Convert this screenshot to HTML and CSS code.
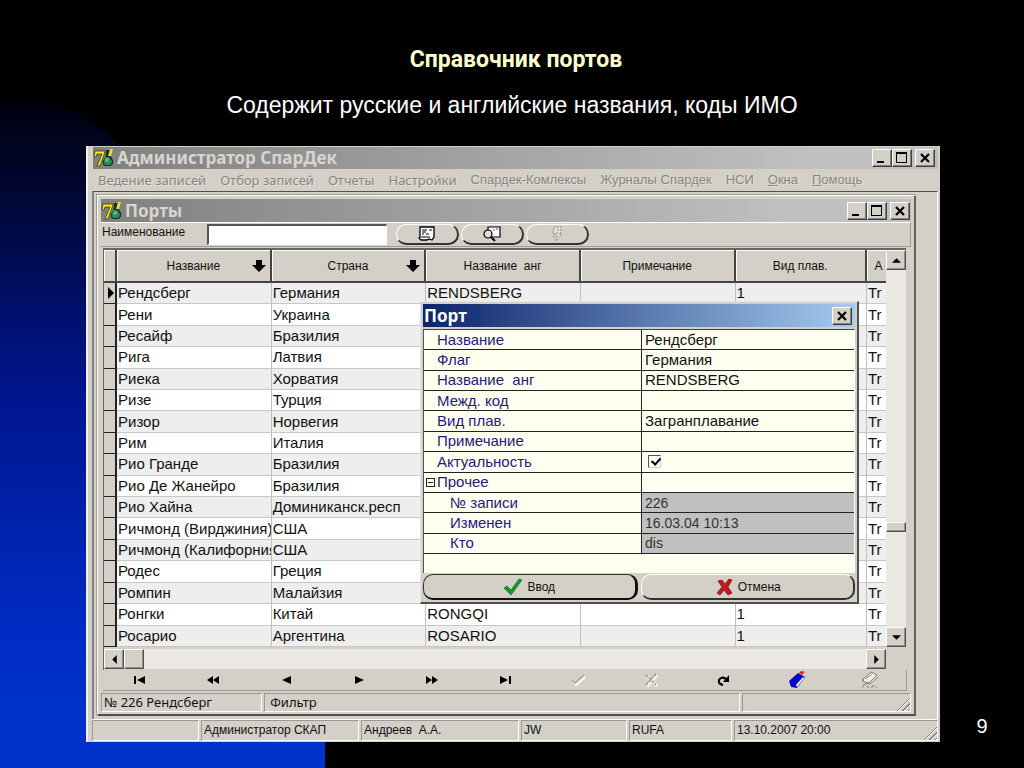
FILE: index.html
```html
<!DOCTYPE html>
<html lang="ru">
<head>
<meta charset="utf-8">
<title>Справочник портов</title>
<link rel="stylesheet" href="styles.css">
</head>
<body>
<svg class="defs" aria-hidden="true">
  <symbol id="min" viewBox="0 0 14 12"><path d="M2 9h7v2H2z"/></symbol>
  <symbol id="max" viewBox="0 0 14 12"><path fill-rule="evenodd" d="M1 0h11v11H1zM2 2v8h9V2z"/></symbol>
  <symbol id="close" viewBox="0 0 14 12"><path d="M3 2l8 8M11 2l-8 8" stroke="#000" stroke-width="2.2"/></symbol>
  <symbol id="logo" viewBox="0 0 22 20">
    <path d="M13 2h4v5l3 5q1 5-3 6h-5q-3-1-2-5l3-6z" fill="#12331c"/>
    <path d="M12 9h4l3 4q0 4-3 4h-3q-3-1-2-4z" fill="#2f8a55"/>
    <circle cx="14" cy="12" r="2" fill="#5fb59a"/>
    <path d="M17 1h3l-2 7h-3z" fill="#e8e020"/>
    <path d="M2 3h10l-1 4-4 11H4l5-12H4L3 9H1z" fill="#f4ea18" stroke="#3a3a10" stroke-width=".8"/>
  </symbol>
  <symbol id="sort" viewBox="0 0 14 12"><path d="M4 0h6v5h4l-7 7-7-7h4z"/></symbol>
</svg>
<main class="slide">
  <div class="backdrop"></div>
  <header class="heading">
    <h1 class="title">Справочник портов</h1>
    <p class="subtitle">Содержит русские и английские названия, коды ИМО</p>
  </header>
  <section class="window">
    <div class="titlebar">
      <svg class="logo"><use href="#logo"/></svg>
      <span class="caption">Администратор СпарДек</span>
      <span class="winbuttons">
        <button class="winbtn" aria-label="Свернуть"><svg><use href="#min"/></svg></button><button class="winbtn" aria-label="Развернуть"><svg><use href="#max"/></svg></button><button class="winbtn spaced" aria-label="Закрыть"><svg><use href="#close"/></svg></button>
      </span>
    </div>
    <nav class="menu">
      <a href="#">Ведение записей</a><a href="#">Отбор записей</a><a href="#">Отчеты</a><a href="#">Настройки</a><a href="#" class="light">Спардек-Комлексы</a><a href="#" class="light">Журналы Спардек</a><a href="#" class="light">НСИ</a><a href="#" class="light"><u>О</u>кна</a><a href="#" class="light"><u>П</u>омощь</a>
    </nav>
    <div class="mdi">
      <section class="child">
        <div class="titlebar child-title">
          <svg class="logo"><use href="#logo"/></svg>
          <span class="caption">Порты</span>
          <span class="winbuttons">
            <button class="winbtn" aria-label="Свернуть"><svg><use href="#min"/></svg></button><button class="winbtn" aria-label="Развернуть"><svg><use href="#max"/></svg></button><button class="winbtn spaced" aria-label="Закрыть"><svg><use href="#close"/></svg></button>
          </span>
        </div>
        <div class="toolbar">
          <label class="search-label" for="name">Наименование</label>
          <input class="search" id="name" type="text">
          <button class="pill" aria-label="Список">
            <svg viewBox="0 0 18 16"><path d="M2 1h14v10l-2 3-3-1-2 1H3l-2-2 1-1z" fill="#fff" stroke="#000" stroke-width="1.3"/><path d="M4 4h5M11 4h3M4 6h4M4 8h2M8 8h3M3 11h9" stroke="#000" fill="none"/></svg>
          </button>
          <button class="pill" aria-label="Найти">
            <svg viewBox="0 0 18 16"><path d="M5 1h12v10H5z" fill="#fff" stroke="#000" stroke-width="1.2"/><path d="M10 4h2M13 3h2" stroke="#555"/><circle cx="5" cy="8" r="4" fill="#ddd" stroke="#000" stroke-width="1.2"/><path d="M8 11l4 4" stroke="#000" stroke-width="2"/></svg>
          </button>
          <button class="pill" aria-label="Выполнить" disabled>
            <svg viewBox="0 0 18 16"><path d="M6 1h7v5l-2 2h3l-6 7v-4H5l3-3H5z" fill="#e4e1da" stroke="#8c8981" stroke-dasharray="2 1"/><path d="M9 4h2M8 7h2M8 10h2" stroke="#8c8981"/></svg>
          </button>
        </div>
        <div class="gridbox">
          <div class="tablewrap">
            <table class="ports">
              <colgroup><col class="c-ind"><col class="c-wide"><col class="c-wide"><col class="c-wide"><col class="c-wide"><col class="c-kind"><col class="c-act"></colgroup>
              <thead><tr><th></th><th><span class="th">Название<svg><use href="#sort"/></svg></span></th><th><span class="th">Страна<svg><use href="#sort"/></svg></span></th><th>Название&nbsp; анг</th><th>Примечание</th><th>Вид плав.</th><th class="cut">А</th></tr></thead>
              <tbody>
                <tr><th class="current"></th><td>Рендсберг</td><td>Германия</td><td>RENDSBERG</td><td></td><td>1</td><td>Tr</td></tr>
                <tr><th></th><td>Рени</td><td>Украина</td><td></td><td></td><td></td><td>Tr</td></tr>
                <tr><th></th><td>Ресайф</td><td>Бразилия</td><td></td><td></td><td></td><td>Tr</td></tr>
                <tr><th></th><td>Рига</td><td>Латвия</td><td></td><td></td><td></td><td>Tr</td></tr>
                <tr><th></th><td>Риека</td><td>Хорватия</td><td></td><td></td><td></td><td>Tr</td></tr>
                <tr><th></th><td>Ризе</td><td>Турция</td><td></td><td></td><td></td><td>Tr</td></tr>
                <tr><th></th><td>Ризор</td><td>Норвегия</td><td></td><td></td><td></td><td>Tr</td></tr>
                <tr><th></th><td>Рим</td><td>Италия</td><td></td><td></td><td></td><td>Tr</td></tr>
                <tr><th></th><td>Рио Гранде</td><td>Бразилия</td><td></td><td></td><td></td><td>Tr</td></tr>
                <tr><th></th><td>Рио Де Жанейро</td><td>Бразилия</td><td></td><td></td><td></td><td>Tr</td></tr>
                <tr><th></th><td>Рио Хайна</td><td>Доминиканск.респ</td><td></td><td></td><td></td><td>Tr</td></tr>
                <tr><th></th><td>Ричмонд (Вирджиния)</td><td>США</td><td></td><td></td><td></td><td>Tr</td></tr>
                <tr><th></th><td>Ричмонд (Калифорния)</td><td>США</td><td></td><td></td><td></td><td>Tr</td></tr>
                <tr><th></th><td>Родес</td><td>Греция</td><td></td><td></td><td></td><td>Tr</td></tr>
                <tr><th></th><td>Ромпин</td><td>Малайзия</td><td></td><td></td><td></td><td>Tr</td></tr>
                <tr><th></th><td>Ронгки</td><td>Китай</td><td>RONGQI</td><td></td><td>1</td><td>Tr</td></tr>
                <tr><th></th><td>Росарио</td><td>Аргентина</td><td>ROSARIO</td><td></td><td>1</td><td>Tr</td></tr>
              </tbody>
            </table>
          </div>
          <div class="vscroll">
            <button class="sbtn" aria-label="Вверх"><svg viewBox="0 0 8 8"><path d="M0 6h8L4 2z"/></svg></button>
            <span class="track-before"></span><span class="vthumb"></span><span class="track-after"></span>
            <button class="sbtn" aria-label="Вниз"><svg viewBox="0 0 8 8"><path d="M0 2h8L4 6z"/></svg></button>
          </div>
          <div class="hscroll">
            <button class="sbtn" aria-label="Влево"><svg viewBox="0 0 8 8"><path d="M6 0v8L2 4z"/></svg></button>
            <span class="hthumb"></span><span class="track-after"></span>
            <button class="sbtn" aria-label="Вправо"><svg viewBox="0 0 8 8"><path d="M2 0v8l4-4z"/></svg></button>
          </div>
        </div>
        <div class="navigator">
          <button aria-label="Первая"><svg viewBox="0 0 20 16"><path d="M4 4h2v8H4zM15 4v8L7 8z"/></svg></button>
          <button aria-label="Страница назад"><svg viewBox="0 0 20 16"><path d="M10 4v8L4 8zM16 4v8l-6-4z"/></svg></button>
          <button aria-label="Назад"><svg viewBox="0 0 20 16"><path d="M15 4v8L6 8z"/></svg></button>
          <button aria-label="Вперед"><svg viewBox="0 0 20 16"><path d="M6 4v8l9-4z"/></svg></button>
          <button aria-label="Страница вперед"><svg viewBox="0 0 20 16"><path d="M4 4v8l6-4zM10 4v8l6-4z"/></svg></button>
          <button aria-label="Последняя"><svg viewBox="0 0 20 16"><path d="M5 4v8l8-4zM14 4h2v8h-2z"/></svg></button>
          <button aria-label="Сохранить" disabled><svg viewBox="0 0 20 16"><path d="M5 9l3 4 9-8" stroke="#fff" stroke-width="2" fill="none"/><path d="M4 8l3 3 9-8" stroke="#a3a099" stroke-width="1.4" fill="none"/></svg></button>
          <button aria-label="Отменить" disabled><svg viewBox="0 0 20 16"><path d="M6 4l10 10M16 3L6 14" stroke="#fff" stroke-width="3"/><path d="M5 3l10 10M15 2L5 13" stroke="#a3a099" stroke-width="2" stroke-dasharray="3 1"/></svg></button>
          <button aria-label="Обновить"><svg viewBox="0 0 20 16"><path d="M9 13q-5-1-4-5 2-4 7-1" stroke="#000" stroke-width="2.2" fill="none"/><path d="M15 3v7H9z"/></svg></button>
          <button aria-label="Справочник"><svg class="big" viewBox="0 0 20 18"><path d="M2 10l9-8 7 4-8 11-6-1z" fill="#0a08c4"/><path d="M9 14l7-8 1 1-7 9z" fill="#fff"/><path d="M12 2l2-2 5 1-3 1v2z" fill="#d8232f"/></svg></button>
          <button aria-label="Закладки" disabled><svg class="big" viewBox="0 0 20 18"><path d="M3 8l8-7 6 3-8 8-5-1zM5 12l5 1 8-7M3 8v3M5 8l7-5M3 17v-3h3M8 17v-2M12 17v-2h3M17 17v-1" fill="#eeece6" stroke="#85827b"/></svg></button>
        </div>
        <div class="status inner">
          <span>№ 226 Рендсберг</span><span>Фильтр</span><span class="grip"></span>
        </div>
      </section>
      <section class="dialog">
        <div class="dialog-title"><span>Порт</span><button class="winbtn" aria-label="Закрыть"><svg><use href="#close"/></svg></button></div>
        <div class="sheet">
          <table class="props">
            <tbody>
            <tr><th>Название</th><td>Рендсберг</td></tr>
            <tr><th>Флаг</th><td>Германия</td></tr>
            <tr><th>Название&nbsp; анг</th><td>RENDSBERG</td></tr>
            <tr><th>Межд. код</th><td></td></tr>
            <tr><th>Вид плав.</th><td>Загранплавание</td></tr>
            <tr><th>Примечание</th><td></td></tr>
            <tr><th><label for="actual">Актуальность</label></th><td><input class="check" id="actual" type="checkbox" checked></td></tr>
            <tr><th class="group"><span class="toggle"></span>Прочее</th><td></td></tr>
            <tr><th class="sub">№ записи</th><td class="ro">226</td></tr>
            <tr><th class="sub">Изменен</th><td class="ro">16.03.04 10:13</td></tr>
            <tr><th class="sub">Кто</th><td class="ro">dis</td></tr>
            </tbody>
          </table>
        </div>
        <div class="actions">
          <button class="action default"><svg viewBox="0 0 20 18"><path d="M1 10l3-2 4 4L16 1l3 1L8 17z" fill="#159a2c" stroke="#0c6a1c" stroke-width=".7"/></svg>Ввод</button>
          <button class="action"><svg viewBox="0 0 20 18"><path d="M4 3l4-1 3 4 4-5 3 1-4 7 4 6-4 2-4-5-4 5-3-2 5-6z" fill="#c01a20" stroke="#7c0c10" stroke-width=".7"/></svg>Отмена</button>
        </div>
      </section>
    </div>
    <div class="status outer">
      <span></span><span>Администратор СКАП</span><span>Андреев&nbsp; А.А.</span><span>JW</span><span>RUFA</span><span class="grip">13.10.2007 20:00</span>
    </div>
  </section>
  <span class="page">9</span>
</main>
</body>
</html>
```
FILE: styles.css
```css
* { box-sizing: border-box; }
body { margin: 0; background: #000; font-family: "Liberation Sans", Arial, sans-serif; color: #111; }
button { font: inherit; color: inherit; padding: 0; margin: 0; border: 0; background: none; }
svg { display: block; flex: none; }
.defs { position: absolute; width: 0; height: 0; }

.slide {
  position: relative;
  display: grid;
  grid-template-columns: 86px minmax(0, 1fr) 84px;
  grid-template-rows: auto auto 1fr;
  min-height: 100vh;
  padding-bottom: 26px;
}
.backdrop {
  position: absolute;
  left: 0; top: 96px; bottom: 0;
  width: 325px;
  background: linear-gradient(#00000a, #00062c 12%, #00148a 42%, #002cc4 80%, #0033cc);
  clip-path: path("M0 4C60 4 92 18 118 50L325 260V2000H0Z");
}
.heading { grid-column: 1 / -1; text-align: center; padding: 44px 0 26px; position: relative; }
.title { margin: 0 0 14px; padding-left: 8px; font: bold 23px/32px Roboto, "Liberation Sans", sans-serif; color: #ffffcc; }
.subtitle { margin: 0; font-size: 23px; line-height: 30px; color: #fff; }
.page { grid-column: 3; grid-row: 2; align-self: end; justify-self: center; color: #fff; font-size: 20px; line-height: 32px; }

.window { position: relative; grid-column: 2; grid-row: 2; background: #d4d0c8; border-left: 2px solid #f2f2f4; padding: 1px 2px 1px 4px; }
.titlebar { display: flex; align-items: center; height: 22px; background: linear-gradient(90deg, #808080, #c0c0c0 85%); margin-left: 1px; padding-right: 3px; }
.child-title { height: 23px; margin: 0; padding-right: 1px; }
.logo { width: 22px; height: 20px; margin-right: 2px; }
.caption { flex: 1; font: bold 17px/22px "Noto Sans", "Open Sans", sans-serif; color: #d8d5ce; white-space: nowrap; }
.winbuttons { display: flex; }
.winbtn { display: flex; align-items: center; justify-content: center; width: 20px; height: 18px; background: #d4d0c8; border: 1px solid; border-color: #fff #404040 #404040 #fff; box-shadow: inset -1px -1px #808080; }
.winbtn svg { width: 14px; height: 12px; }
.spaced { margin-left: 3px; }

.menu { display: flex; gap: 14px; height: 22px; padding-left: 6px; font: 13px/22px "Noto Sans", "Open Sans", sans-serif; }
.menu a { color: #8a8780; text-decoration: none; white-space: nowrap; text-shadow: 1px 1px #e2dfd8; }
.menu .light { font-family: "Liberation Sans", sans-serif; line-height: 21px; }

.mdi { position: relative; border-top: 1px solid #505050; border-left: 2px solid #808080; border-right: 1px solid #fff; padding: 3px 21px 3px 3px; }
.child { border: 1px solid #fff; border-right: 2px solid #606060; border-bottom: 2px solid #505050; padding: 3px 3px 2px 3px; box-shadow: -1px -1px #a09c94; }
.toolbar { display: flex; align-items: center; height: 25px; border-top: 1px solid #fff; border-right: 1px solid #a09c94; border-bottom: 1px solid #a09c94; }
.search-label { flex: none; width: 106px; font-size: 12px; line-height: 14px; align-self: flex-start; padding-top: 2px; padding-left: 1px; }
.search { width: 180px; height: 21px; border: 1px solid #fff; border-top: 2px solid #555; border-left: 2px solid #555; background: #fff; margin-right: 9px; }
.pill { display: flex; align-items: center; justify-content: center; width: 63px; height: 21px; margin-right: 2px; border-style: solid; border-width: 1px 2px 2px 1px; border-color: #fff #333 #333 #fff; border-radius: 12px; }
.pill svg { width: 18px; height: 16px; }

.gridbox { display: grid; grid-template-columns: minmax(0, 1fr) 20px; margin: 1px 5px 0 2px; border-top: 2px solid #666; border-left: 1px solid #666; }
.tablewrap { overflow: hidden; }
.ports { width: 100%; height: 397px; table-layout: fixed; border-collapse: separate; border-spacing: 0; font-size: 15px; line-height: 18px; background: #fff; }
.c-ind { width: 13px; }
.c-wide { width: 20%; }
.c-kind { width: 17%; }
.c-act { width: 19px; }
.ports thead th { height: 33px; padding: 0 4px; font-size: 12px; font-weight: normal; background: #d4d0c8; border-right: 2px solid #444; border-bottom: 2px solid #444; box-shadow: inset 1px 1px #fff; white-space: nowrap; }
.ports thead th:first-child { padding: 0; }
.ports thead .cut { border-right: 0; padding: 0 0 0 4px; }
.th { display: flex; align-items: center; padding-right: 0; }
.th::before { content: ""; width: 14px; }
.th { justify-content: space-between; }
.th svg { width: 14px; height: 12px; }
.ports tbody th { padding: 0; background: #d4d0c8; border-right: 2px solid #222; border-bottom: 1px solid #222; }
.ports td { padding: 0 0 0 1px; border-right: 1px solid #c0c0c0; border-bottom: 1px solid #c8c8c8; white-space: nowrap; overflow: hidden; }
.ports td:last-child { border-right: 0; }
.ports tbody tr:nth-child(odd) td { background: #eee; }
.current::before { content: ""; display: block; width: 0; margin-left: 4px; border: 6px solid transparent; border-left-color: #000; border-right: 0; }

.vscroll, .hscroll { display: flex; background-color: #eceae6; background-image: repeating-conic-gradient(#f2f1ee 0 25%, #e2dfd9 0 50%); background-size: 2px 2px; }
.vscroll { flex-direction: column; }
.hscroll { height: 20px; margin: 2px 0 1px; }
.sbtn, .hthumb, .vthumb { flex: none; display: flex; align-items: center; justify-content: center; width: 20px; height: 20px; background: #d4d0c8; border: 1px solid; border-color: #fff #505050 #505050 #fff; box-shadow: inset -1px -1px #909090; }
.sbtn svg { width: 9px; height: 9px; }
.vthumb { height: 10px; }
.track-before { flex: 252; }
.vscroll .track-after { flex: 95; }
.track-after { flex: 1; }

.navigator { display: grid; grid-template-columns: repeat(11, 1fr); height: 21px; margin: 0 4px 0 2px; border-bottom: 1px solid #999; border-right: 1px solid #999; }
.navigator button { display: flex; align-items: center; justify-content: center; }
.navigator svg { width: 20px; height: 16px; }
.navigator .big { height: 18px; }

.status { display: grid; gap: 2px; white-space: nowrap; }
.status span { border: 1px solid; border-color: #999 #fff #fff #999; overflow: hidden; }
.inner { grid-template-columns: 20fr 59fr 21fr; margin-top: 2px; font: 13px/17px "Noto Sans", "Open Sans", sans-serif; }
.inner span { min-height: 19px; padding-left: 2px; }
.inner span + span { padding-left: 5px; }
.outer { grid-template-columns: 107fr 158fr 158fr 106fr 103fr 204fr; border-top: 1px solid #fff; font-size: 12px; line-height: 19px; }
.outer span { min-height: 21px; padding-left: 2px; }
.status .grip { background-image: linear-gradient(135deg, #d4d0c8 50%, transparent 50%), repeating-linear-gradient(135deg, #d4d0c8 0 2px, #808080 2px 3px, #fff 3px 4px); background-size: 14px 14px; background-position: right bottom; background-repeat: no-repeat; }

.dialog { position: absolute; left: 326px; top: 109px; width: 439px; background: #d4d0c8; border: 1px solid; border-color: #e8e6e0 #505050 #505050 #e8e6e0; border-right-width: 2px; border-bottom-width: 2px; padding: 2px; }
.dialog-title { display: flex; align-items: center; justify-content: space-between; height: 23px; padding: 0 3px 0 1px; background: linear-gradient(90deg, #0a246a, #a6caf0); color: #fff; font: bold 17px/22px "Noto Sans", "Open Sans", sans-serif; }
.sheet { margin-top: 2px; padding-bottom: 19px; background: #fffff0; border-top: 1px solid #444; border-left: 1px solid #555; border-right: 1px solid #fff; }
.props { width: 100%; height: 224px; table-layout: fixed; border-spacing: 0; font-size: 15px; line-height: 18px; }
.props th { width: 218px; padding: 0 0 0 13px; text-align: left; font-weight: normal; color: #231a80; border-bottom: 1px solid #222; border-right: 1px solid #222; }
.props td { padding: 0 0 0 3px; border-bottom: 1px solid #222; }
.props .group { padding-left: 2px; }
.props .sub { padding-left: 26px; }
.props .ro { background: #c0c0c0; color: #333; font-size: 14px; }
.toggle { display: inline-block; width: 9px; height: 9px; margin-right: 2px; border: 1px solid #222; background: linear-gradient(#222, #222) center / 5px 1px no-repeat; }
.check { display: block; appearance: none; width: 13px; height: 13px; margin: 0 0 0 3px; border: 1px solid #d4d0c8; border-top-color: #555; border-left-color: #555; background: #fff; }
.check:checked::before { content: ""; display: block; width: 4px; height: 7px; margin: 0 0 0 4px; border: solid #000; border-width: 0 2px 2px 0; transform: rotate(42deg); }
.actions { display: grid; grid-template-columns: 1fr 1fr; gap: 3px; padding-top: 1px; }
.action { display: flex; align-items: center; justify-content: center; gap: 4px; height: 26px; font-size: 12px; border-style: solid; border-width: 1px 2px 2px 1px; border-color: #fff #333 #333 #fff; border-radius: 10px; }
.action svg { width: 20px; height: 18px; }
.default { border-color: #333 #111 #111 #333; border-right-width: 3px; }
```
